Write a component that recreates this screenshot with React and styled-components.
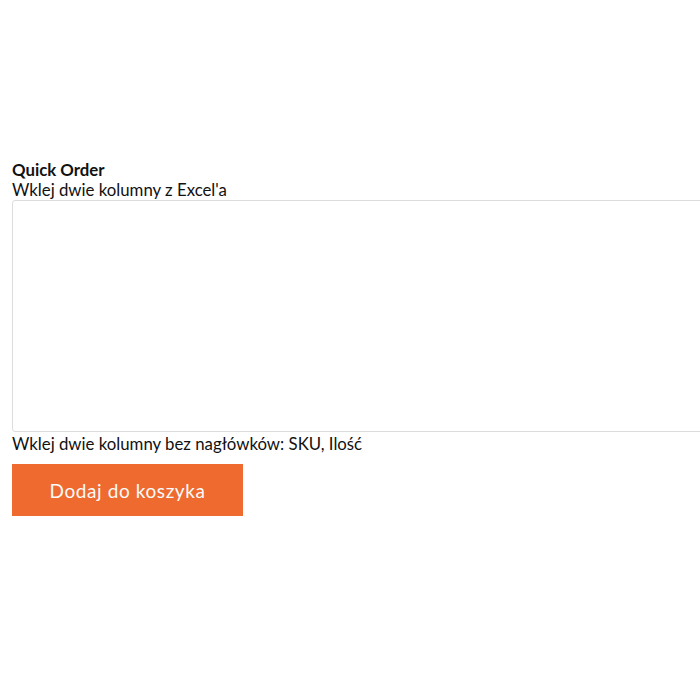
import React from "react";
import styled, { createGlobalStyle } from "styled-components";

const GlobalStyle = createGlobalStyle`
  body {
    margin: 0;
    background: #fff;
    font-family: Lato, "Open Sans", sans-serif;
    color: #111;
  }
`;

const Page = styled.div`
  padding: 160px 0 0 12px;
  overflow: hidden;
  width: 700px;
  box-sizing: border-box;
`;

const Form = styled.form`
  display: flex;
  flex-direction: column;
  align-items: flex-start;
`;

const Title = styled.div`
  font-size: 16.8px;
  font-weight: 700;
  line-height: 20px;
`;

const Label = styled.label`
  font-size: 16.8px;
  line-height: 20px;
`;

const Paste = styled.textarea`
  width: 720px;
  height: 232px;
  box-sizing: border-box;
  border: 1px solid #dcdcdc;
  border-radius: 3px;
  resize: none;
  margin: 0;
  outline: none;
`;

const Hint = styled.div`
  font-size: 16.8px;
  line-height: 20px;
  margin-top: 2px;
`;

const Submit = styled.button`
  margin-top: 10px;
  width: 231px;
  height: 52px;
  border: none;
  background: #ee6a2e;
  color: #fafafa;
  font-family: inherit;
  font-size: 19px;
  letter-spacing: 0.6px;
  cursor: pointer;
`;

const App = () => {
  return (
    <Page>
      <GlobalStyle />
      <Form onSubmit={(e) => e.preventDefault()}>
        <Title>Quick Order</Title>
        <Label htmlFor="quick-order">Wklej dwie kolumny z Excel'a</Label>
        <Paste id="quick-order" />
        <Hint>Wklej dwie kolumny bez nagłówków: SKU, Ilość</Hint>
        <Submit type="submit">Dodaj do koszyka</Submit>
      </Form>
    </Page>
  );
};

export default App;
